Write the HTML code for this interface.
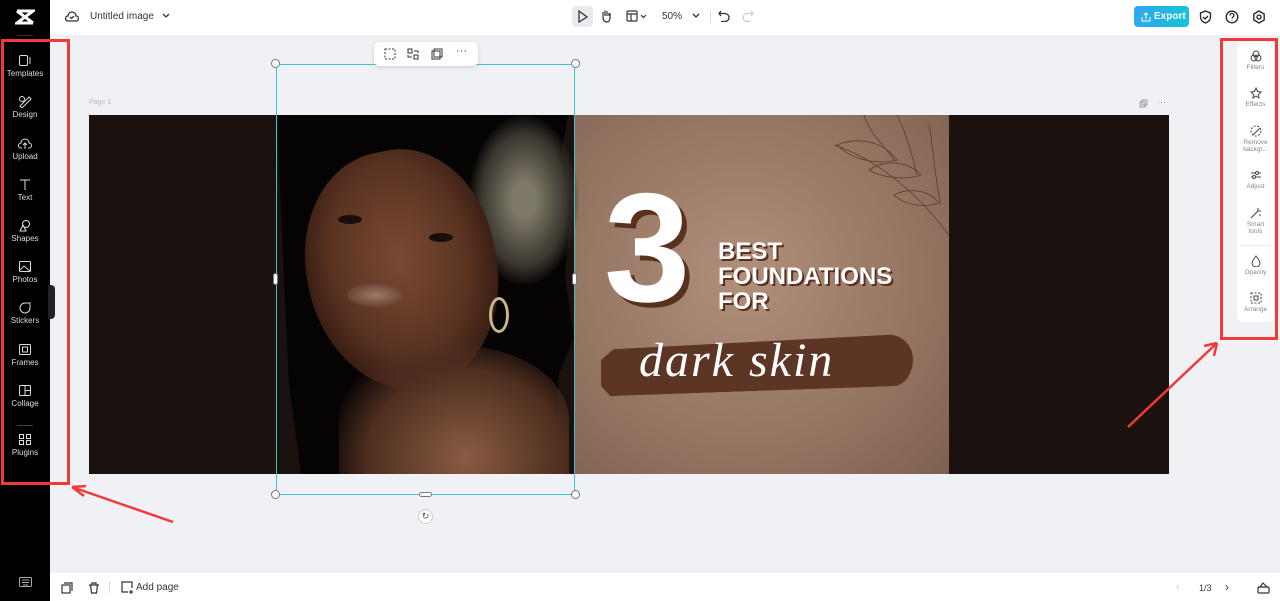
<!DOCTYPE html>
<html><head><meta charset="utf-8"><style>
*{box-sizing:border-box;margin:0;padding:0}
body{width:1280px;height:601px;overflow:hidden;background:#eff1f4;font-family:"Liberation Sans",sans-serif;position:relative}
.abs{position:absolute}
#side{left:0;top:0;width:50px;height:601px;background:#000}
.si{position:absolute;left:0;width:50px;text-align:center;color:#ddd;font-size:8px}
.si svg{display:block;margin:0 auto 2px}
#top{left:50px;top:0;width:1230px;height:35px;background:#fff}
#bot{left:50px;top:573px;width:1230px;height:28px;background:#fff}
.rp{position:absolute;left:0;width:37px;text-align:center;color:#888;font-size:6.5px;line-height:7px}
.rp svg{display:block;margin:0 auto 2px}
</style></head><body>
<div id="side" class="abs">
 <svg class="abs" style="left:15px;top:9px" width="20" height="16" viewBox="0 0 20 16"><path d="M2 2h16L2 14h16M2 2l16 12" stroke="#fff" stroke-width="3" fill="none"/></svg>
 <div class="abs" style="left:17px;top:35px;width:16px;height:1px;background:#333"></div>
 <div class="si" style="top:54px"><svg width="14" height="13" viewBox="0 0 14 13" fill="none" stroke="#ddd"><rect x="1.5" y="1.5" width="8" height="10" rx="1.5"/><path d="M12 3v7"/></svg>Templates</div>
 <div class="si" style="top:95px"><svg width="14" height="13" viewBox="0 0 14 13" fill="none" stroke="#ddd"><circle cx="4" cy="4" r="2.5"/><path d="M2 11l9-9 2 2-9 9z"/></svg>Design</div>
 <div class="si" style="top:137px"><svg width="14" height="13" viewBox="0 0 14 13" fill="none" stroke="#ddd"><path d="M4 11H3a2.5 2.5 0 010-5 4 4 0 018 0 2.5 2.5 0 010 5h-1M7 12V6M5 8l2-2 2 2"/></svg>Upload</div>
 <div class="si" style="top:178px"><svg width="14" height="13" viewBox="0 0 14 13" fill="none" stroke="#ddd"><path d="M2 2h10M7 2v10"/></svg>Text</div>
 <div class="si" style="top:219px"><svg width="14" height="13" viewBox="0 0 14 13" fill="none" stroke="#ddd"><circle cx="8" cy="5" r="3.5"/><path d="M2 12l3-6 3 6z"/></svg>Shapes</div>
 <div class="si" style="top:260px"><svg width="14" height="13" viewBox="0 0 14 13" fill="none" stroke="#ddd"><rect x="1.5" y="1.5" width="11" height="10" rx="1"/><path d="M2 10l4-4 6 5"/></svg>Photos</div>
 <div class="si" style="top:301px"><svg width="14" height="13" viewBox="0 0 14 13" fill="none" stroke="#ddd"><path d="M12 7A5 5 0 117 2h5v5z"/></svg>Stickers</div>
 <div class="si" style="top:343px"><svg width="14" height="13" viewBox="0 0 14 13" fill="none" stroke="#ddd"><rect x="1.5" y="1.5" width="11" height="10" rx="1"/><rect x="4.5" y="4" width="5" height="5"/></svg>Frames</div>
 <div class="si" style="top:384px"><svg width="14" height="13" viewBox="0 0 14 13" fill="none" stroke="#ddd"><rect x="1.5" y="1.5" width="11" height="10" rx="1"/><path d="M7 1.5v10M7 6.5h5.5"/></svg>Collage</div>
 <div class="abs" style="left:17px;top:425px;width:16px;height:1px;background:#444"></div>
 <div class="si" style="top:433px"><svg width="14" height="13" viewBox="0 0 14 13" fill="none" stroke="#ddd"><rect x="1.5" y="1.5" width="4" height="4"/><rect x="8.5" y="1.5" width="4" height="4"/><rect x="1.5" y="7.5" width="4" height="4"/><rect x="8.5" y="7.5" width="4" height="4"/></svg>Plugins</div>
 <svg class="abs" style="left:19px;top:577px" width="13" height="10" viewBox="0 0 13 10" fill="none" stroke="#aaa"><rect x=".5" y=".5" width="12" height="9" rx="1"/><path d="M3 3h7M3 5.5h7M4 8h5"/></svg>
</div>
<div class="abs" style="left:48px;top:285px;width:7px;height:34px;background:#222;border-radius:0 4px 4px 0"></div>

<div id="top" class="abs">
 <svg class="abs" style="left:15px;top:10px" width="14" height="12" viewBox="0 0 14 12" fill="none" stroke="#333" stroke-width="1.3"><path d="M4 11H3a2.5 2.5 0 010-5 4 4 0 018 0 2.5 2.5 0 010 5H4M5 7l1.5 1.5L9 6"/></svg>
 <div class="abs" style="left:40px;top:11px;font-size:10px;color:#333">Untitled image</div>
 <svg class="abs" style="left:112px;top:13px" width="8" height="6"><path d="M1 1l3 3 3-3" stroke="#333" fill="none" stroke-width="1.3"/></svg>
 <div class="abs" style="left:522px;top:6px;width:21px;height:21px;background:#e8eaee;border-radius:4px"></div>
 <svg class="abs" style="left:527px;top:10px" width="12" height="13"><path d="M2 1l8 6-8 5z" stroke="#333" fill="none" stroke-width="1.3"/></svg>
 <svg class="abs" style="left:550px;top:9px" width="12" height="14"><path d="M3 8V3M5 7V1.5M7 7V2M9 7V4M3 8c0 4 2 5 4 5s3-2 3-4V4" stroke="#333" fill="none" stroke-width="1.2"/></svg>
 <svg class="abs" style="left:576px;top:10px" width="22" height="12" fill="none" stroke="#333" stroke-width="1.2"><rect x="1" y="1" width="10" height="10" rx="1"/><path d="M1 4h10M5 4v7M15 5l2.5 2.5L20 5"/></svg>
 <div class="abs" style="left:612px;top:11px;font-size:10px;color:#333">50%</div>
 <svg class="abs" style="left:642px;top:13px" width="8" height="6"><path d="M1 1l3 3 3-3" stroke="#333" fill="none" stroke-width="1.3"/></svg>
 <div class="abs" style="left:660px;top:10px;width:1px;height:14px;background:#ddd"></div>
 <svg class="abs" style="left:668px;top:10px" width="12" height="12"><path d="M3 1L1 3.5 3 6M1 3.5h6a4 4 0 010 8H3" stroke="#333" fill="none" stroke-width="1.3"/></svg>
 <svg class="abs" style="left:692px;top:10px" width="12" height="12"><path d="M9 1l2 2.5L9 6M11 3.5H5a4 4 0 000 8h4" stroke="#ccc" fill="none" stroke-width="1.3"/></svg>
 <div class="abs" style="left:1084px;top:6px;width:55px;height:21px;background:linear-gradient(90deg,#2fa7f2,#14c3d8);border-radius:4px;color:#fff;font-size:10px;font-weight:bold;line-height:21px;padding-left:20px">Export</div>
 <svg class="abs" style="left:1091px;top:12px" width="10" height="10"><path d="M1 5v4h8V5M5 7V1M3 3l2-2 2 2" stroke="#fff" fill="none"/></svg>
 <svg class="abs" style="left:1149px;top:10px" width="13" height="14"><path d="M6.5 1l5 2v4c0 3-2.5 5-5 6-2.5-1-5-3-5-6V3z M4 7l2 2 3-3" stroke="#222" fill="none" stroke-width="1.3"/></svg>
 <svg class="abs" style="left:1175px;top:10px" width="14" height="14"><circle cx="7" cy="7" r="5.8" stroke="#222" fill="none" stroke-width="1.3"/><path d="M5 5.5a2 2 0 114 0c0 1.5-2 1.5-2 3M7 10v.5" stroke="#222" fill="none" stroke-width="1.3"/></svg>
 <svg class="abs" style="left:1202px;top:10px" width="14" height="14"><path d="M7 1l5.2 3v6L7 13 1.8 10V4z" stroke="#222" fill="none" stroke-width="1.3"/><circle cx="7" cy="7" r="2" stroke="#222" fill="none" stroke-width="1.3"/></svg>
</div>

<div class="abs" style="left:89px;top:99px;font-size:7px;color:#bbb">Page 1</div>
<svg class="abs" style="left:1139px;top:99px" width="9" height="9"><rect x="1" y="3" width="5" height="5" stroke="#999" fill="none"/><rect x="3" y="1" width="5" height="5" stroke="#999" fill="none"/></svg>
<div class="abs" style="left:1157px;top:97px;font-size:9px;color:#888">···</div>

<!-- design -->
<div class="abs" style="left:89px;top:115px;width:1080px;height:359px;background:#1b1210;overflow:hidden">
 <div class="abs" style="left:486px;top:0;width:374px;height:359px;background:radial-gradient(ellipse at 45% 45%,#b0907b,#8f705e 70%,#7e604f)"></div>
 <div class="abs" style="left:188px;top:0;width:300px;height:359px;background:#050303;clip-path:polygon(0 0,97% 0,95% 10%,98% 25%,96% 45%,99% 62%,94% 72%,93% 92%,90% 100%,8% 100%,4% 75%,2% 40%)"></div>
 <div class="abs" style="left:380px;top:0px;width:110px;height:170px;border-radius:50%;background:radial-gradient(ellipse,#7d7868 15%,#3a352e 55%,transparent 72%)"></div>
 <div class="abs" style="left:218px;top:35px;width:190px;height:240px;border-radius:48% 45% 50% 50%;transform:rotate(-12deg);background:radial-gradient(ellipse at 50% 45%,#7a4a33,#5a3322 50%,#2e170e 80%,rgba(5,3,3,0) 100%)"></div>
 <div class="abs" style="left:250px;top:230px;width:230px;height:150px;border-radius:50% 50% 0 0;background:radial-gradient(ellipse at 55% 75%,#8a5c43,#4e2e1f 55%,rgba(5,3,3,0) 80%)"></div>
 <div class="abs" style="left:258px;top:168px;width:58px;height:24px;border-radius:50%;background:radial-gradient(ellipse,#a07a66,#6a4232 70%)"></div>
 <div class="abs" style="left:249px;top:100px;width:24px;height:9px;border-radius:50%;background:#1a0e0a"></div>
 <div class="abs" style="left:340px;top:118px;width:24px;height:9px;border-radius:50%;background:#1a0e0a"></div>
 <div class="abs" style="left:400px;top:182px;width:20px;height:36px;border:3px solid #c9b58a;border-radius:50%"></div>
 <svg class="abs" style="left:720px;top:0" width="145" height="120" fill="none" stroke="#5a3b2c" stroke-width=".8"><path d="M140 120C110 80 70 45 25 30"/><path d="M28 30c20-8 45-5 60 15-20 5-45 0-60-15zM60 55c15-10 38-10 52 5-18 6-40 2-52-5zM85 80c15-8 35-5 45 8-15 5-35 2-45-8zM55 0c5 18 20 30 30 45M88 0c10 20 15 40 20 60M120 10c5 25 5 50 12 80"/></svg>
 <div class="abs" style="left:515px;top:55px;font-size:155px;line-height:155px;font-weight:bold;color:#fff;text-shadow:5px 5px 0 #5a3020">3</div>
 <div class="abs" style="left:629px;top:124px;font-size:24px;line-height:25px;font-weight:bold;color:#fff;text-shadow:2px 2px 0 #5a3020">BEST<br>FOUNDATIONS<br>FOR</div>
 <div class="abs" style="left:512px;top:224px;width:312px;height:52px;background:#5c3524;border-radius:6px 40px 30px 4px/20px 40px 40px 20px;transform:skewY(-2deg);clip-path:polygon(0 30%,4% 10%,100% 0,100% 100%,3% 100%,0 80%)"></div>
 <div class="abs" style="left:550px;top:218px;font-family:'Liberation Serif',serif;font-style:italic;font-size:48px;color:#fff;letter-spacing:2px">dark skin</div>
</div>

<!-- selection -->
<div class="abs" style="left:276px;top:64px;width:299px;height:431px;border:1.5px solid #3cc3d4"></div>
<div class="abs" style="left:271px;top:59px;width:9px;height:9px;border-radius:50%;background:#fff;border:1px solid #777"></div>
<div class="abs" style="left:571px;top:59px;width:9px;height:9px;border-radius:50%;background:#fff;border:1px solid #777"></div>
<div class="abs" style="left:271px;top:490px;width:9px;height:9px;border-radius:50%;background:#fff;border:1px solid #777"></div>
<div class="abs" style="left:571px;top:490px;width:9px;height:9px;border-radius:50%;background:#fff;border:1px solid #777"></div>
<div class="abs" style="left:273px;top:273px;width:5px;height:12px;border-radius:3px;background:#fff;border:1px solid #777"></div>
<div class="abs" style="left:572px;top:273px;width:5px;height:12px;border-radius:3px;background:#fff;border:1px solid #777"></div>
<div class="abs" style="left:419px;top:492px;width:13px;height:5px;border-radius:3px;background:#fff;border:1px solid #777"></div>
<div class="abs" style="left:418px;top:509px;width:15px;height:15px;border-radius:50%;background:#fff;border:1px solid #ccc;font-size:9px;text-align:center;line-height:13px;color:#555">↻</div>
<div class="abs" style="left:374px;top:42px;width:104px;height:24px;background:#fff;border-radius:5px;box-shadow:0 1px 4px rgba(0,0,0,.15)">
 <svg class="abs" style="left:10px;top:6px" width="12" height="12" fill="none" stroke="#333"><rect x="1" y="1" width="10" height="10" stroke-dasharray="2 1.5"/></svg>
 <svg class="abs" style="left:33px;top:6px" width="12" height="12" fill="none" stroke="#333"><rect x="1" y="1" width="4" height="4"/><rect x="7" y="7" width="4" height="4"/><path d="M7 3h4v2M5 9H1V7"/></svg>
 <svg class="abs" style="left:57px;top:6px" width="12" height="12" fill="none" stroke="#333"><rect x="1" y="3" width="8" height="8"/><rect x="3" y="1" width="8" height="8"/></svg>
 <div class="abs" style="left:82px;top:3px;font-size:11px;color:#333">···</div>
</div>

<!-- right panel -->
<div class="abs" style="left:1237px;top:42px;width:37px;height:280px;background:#fff;border-radius:6px">
 <div class="rp" style="top:8px"><svg width="12" height="12" fill="none" stroke="#444"><circle cx="6" cy="4" r="3"/><circle cx="4" cy="8" r="3"/><circle cx="8" cy="8" r="3"/></svg>Filters</div>
 <div class="rp" style="top:45px"><svg width="12" height="12" fill="none" stroke="#444"><path d="M6 1l1.5 3.5L11 5 8.5 7.5 9 11 6 9 3 11l.5-3.5L1 5l3.5-.5z"/></svg>Effects</div>
 <div class="rp" style="top:83px"><svg width="12" height="12" fill="none" stroke="#444"><circle cx="6" cy="6" r="5" stroke-dasharray="2 1.5"/><path d="M3 10l7-7"/></svg>Remove<br>backgr...</div>
 <div class="rp" style="top:127px"><svg width="12" height="12" fill="none" stroke="#444"><path d="M1 4h10M1 8h10"/><circle cx="7" cy="4" r="1.5" fill="#fff"/><circle cx="4" cy="8" r="1.5" fill="#fff"/></svg>Adjust</div>
 <div class="rp" style="top:165px"><svg width="12" height="12" fill="none" stroke="#444"><path d="M1 11l7-7M8 1v3M11 4H8M10 7v2"/></svg>Smart<br>tools</div>
 <div class="abs" style="left:3px;top:203px;width:31px;height:1px;background:#eee"></div>
 <div class="rp" style="top:213px"><svg width="12" height="12" fill="none" stroke="#444"><path d="M6 1C3 5 2 7 2 8a4 4 0 008 0c0-1-1-3-4-7z"/></svg>Opacity</div>
 <div class="rp" style="top:250px"><svg width="12" height="12" fill="none" stroke="#444"><rect x="1" y="1" width="10" height="10" stroke-dasharray="2 1.5"/><rect x="4" y="4" width="4" height="4"/></svg>Arrange</div>
</div>

<div id="bot" class="abs">
 <svg class="abs" style="left:11px;top:9px" width="12" height="12" fill="none" stroke="#333" stroke-width="1.2"><rect x="1" y="3" width="8" height="8"/><path d="M3 1h8v8"/></svg>
 <svg class="abs" style="left:38px;top:9px" width="12" height="12" fill="none" stroke="#333" stroke-width="1.2"><path d="M1 3h10M4 3V1h4v2M2.5 3l1 8h5l1-8"/></svg>
 <div class="abs" style="left:59px;top:8px;width:1px;height:12px;background:#ddd"></div>
 <svg class="abs" style="left:71px;top:8px" width="13" height="13" fill="none" stroke="#333" stroke-width="1.2"><path d="M7 11H1V1h10v6M10 9v4M8 11h4"/></svg>
 <div class="abs" style="left:86px;top:9px;font-size:10px;color:#333">Add page</div>
 <div class="abs" style="left:1126px;top:8px;font-size:11px;color:#ccc">‹</div>
 <div class="abs" style="left:1149px;top:10px;font-size:9px;color:#333">1/3</div>
 <div class="abs" style="left:1175px;top:7px;font-size:12px;color:#333">›</div>
 <svg class="abs" style="left:1207px;top:9px" width="13" height="12" fill="none" stroke="#333" stroke-width="1.2"><rect x="1" y="5" width="11" height="6" rx="1"/><path d="M3 5l3-4 4 4"/></svg>
</div>

<!-- annotations -->
<div class="abs" style="left:1px;top:39px;width:69px;height:446px;border:3px solid #f03a3a"></div>
<div class="abs" style="left:1220px;top:38px;width:58px;height:302px;border:3px solid #f03a3a"></div>
<svg class="abs" style="left:0;top:0" width="1280" height="601"><g stroke="#f03a3a" stroke-width="2.5" fill="none"><path d="M173 522L72 487M72 487l12 9M72 487l14-1"/><path d="M1128 427L1217 343M1217 343l-13 3M1217 343l-3 13"/></g></svg>
</body></html>
